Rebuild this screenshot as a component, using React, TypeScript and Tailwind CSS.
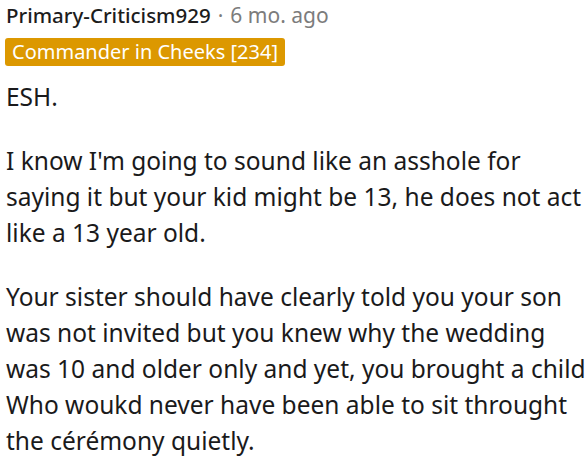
export default function App() {
  const font = { fontFamily: '"Noto Sans", sans-serif' };
  return (
    <div className="w-[588px] h-[463px] bg-white overflow-hidden pl-[6px] pt-[1px]" style={font}>
      <div className="flex items-center gap-[7px] leading-[28px]">
        <span className="font-medium text-[20.5px] text-[#1c1c1c]">Primary-Criticism929</span>
        <span className="text-[21px] text-[#7c7c7c]">·</span>
        <span className="text-[21px] text-[#7c7c7c]">6 mo. ago</span>
      </div>
      <div className="mt-[9px] flex -ml-[1px]">
        <span className="bg-[#dc9800] text-white text-[20px] leading-[28px] px-[7px] rounded-[3px]">
          Commander in Cheeks [234]
        </span>
      </div>
      <div className="mt-[13px] text-[24.5px] leading-[36px] text-[#1a1a1b] flex flex-col gap-[28px]">
        <p>ESH.</p>
        <p>
          I know I'm going to sound like an asshole for saying it but your kid might be 13, he does not act like a 13
          year old.
        </p>
        <p>
          Your sister should have clearly told you your son was not invited but you knew why the wedding was 10 and
          older only and yet, you brought a child Who woukd never have been able to sit throught the cérémony quietly.
        </p>
      </div>
    </div>
  );
}
